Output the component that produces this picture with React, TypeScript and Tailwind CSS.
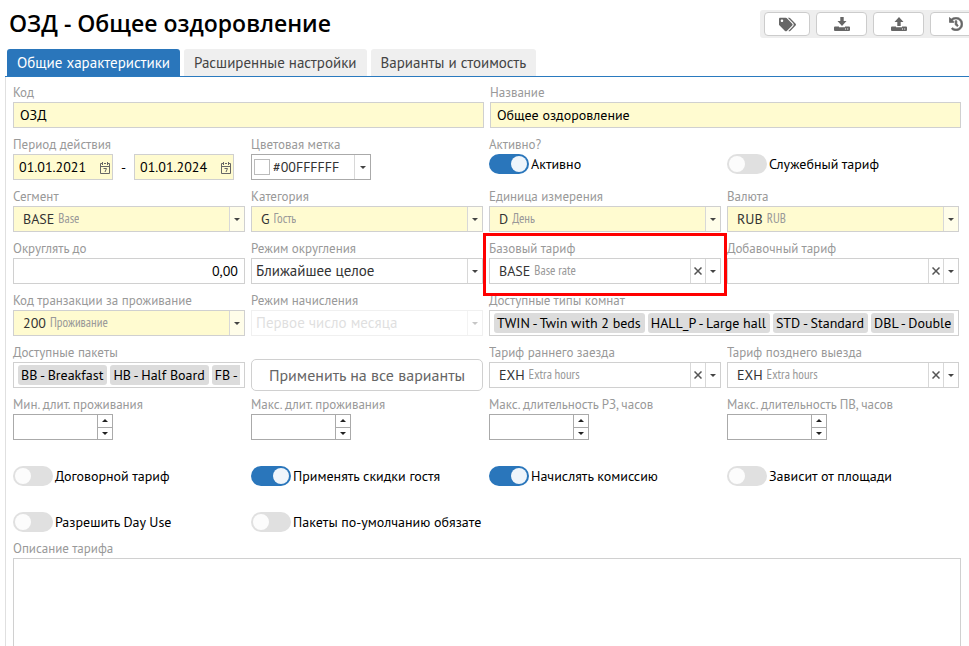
import type { ReactNode } from "react";
import { FaTags, FaHistory } from "react-icons/fa";

const yellow = "bg-[#fffbd0]";

function Caret({ up = false }: { up?: boolean }) {
  return (
    <svg width="6" height="3" viewBox="0 0 6 3" aria-hidden="true" className={up ? "rotate-180" : ""}>
      <path d="M0 0h6L3 3z" fill="currentColor" />
    </svg>
  );
}

function Cross() {
  return (
    <svg width="8" height="8" viewBox="0 0 8 8" aria-hidden="true">
      <path d="M.5.5l7 7M7.500.5l-7 7" stroke="currentColor" strokeWidth="1.5" />
    </svg>
  );
}

function CalendarIcon() {
  return (
    <svg width="10" height="13" viewBox="0 0 10 13" fill="none" stroke="#666" aria-hidden="true">
      <path d="M2 2.500H.5v10h9v-10H8M.5 5.500h9M2.500 1v3M7.500 1v3M4 2.500h2" />
      <path d="M3.500 7.500h3l-1.500 3.500" />
    </svg>
  );
}

function TrayIcon({ up = false }: { up?: boolean }) {
  return (
    <svg width="16" height="14" viewBox="0 0 16 14" fill="currentColor" aria-hidden="true">
      {up ? <path d="M8 0l4.500 5H9.700v4H6.300V5H3.500z" /> : <path d="M6.300 0h3.400v4h2.800L8 9 3.500 4h2.800z" />}
      <path
        fillRule="evenodd"
        d="M1 9.500h4v.7h6v-.7h4a1 1 0 0 1 1 1V13a1 1 0 0 1-1 1H1a1 1 0 0 1-1-1v-2.500a1 1 0 0 1 1-1zm10 2v1h1v-1zm2.200 0v1h1v-1z"
      />
    </svg>
  );
}

function ToolButton({ label, wide = true, children }: { label: string; wide?: boolean; children: ReactNode }) {
  return (
    <button
      type="button"
      aria-label={label}
      className={`flex h-6 items-center justify-center rounded-[4px] border border-[#ccc] bg-white text-[#666] ${wide ? "w-[51px]" : "w-[46px]"}`}
    >
      {children}
    </button>
  );
}

function Field({ label, id, children }: { label: string; id: string; children: ReactNode }) {
  return (
    <div className="relative min-w-0">
      <label htmlFor={id} className="block h-[18px] truncate text-[13px] leading-[18px] text-[#999]">
        {label}
      </label>
      {children}
    </div>
  );
}

function TextField({ label, id, value }: { label: string; id: string; value: string }) {
  return (
    <Field label={label} id={id}>
      <input id={id} defaultValue={value} className={`h-[26px] w-full border border-[#d0d0d0] px-1.5 text-sm text-black ${yellow}`} />
    </Field>
  );
}

function DateBox({ id, value, label }: { id: string; value: string; label: string }) {
  return (
    <div className={`flex h-[26px] w-[100px] items-center border border-[#d0d0d0] ${yellow}`}>
      <input id={id} aria-label={label} defaultValue={value} className="w-full min-w-0 bg-transparent pl-[5px] text-sm text-black" />
      <button type="button" aria-label="Открыть календарь" className="mr-[2px] shrink-0">
        <CalendarIcon />
      </button>
    </div>
  );
}

type LookupProps = { label: string; id: string; code?: string; name?: string; required?: boolean; clearable?: boolean; children?: ReactNode };

function Lookup({ label, id, code = "", name = "", required = false, clearable = false, children }: LookupProps) {
  return (
    <Field label={label} id={id}>
      <div className={`relative flex h-[26px] border border-[#d0d0d0] ${required ? yellow : "bg-white"}`}>
        <div aria-hidden="true" className="flex min-w-0 flex-1 items-center gap-1 pl-[9px] text-sm text-[#333]">
          <span>{code}</span>
          <span className="truncate font-['PT_Sans_Narrow','Noto_Sans',sans-serif] text-[13px] text-[#999]">{name}</span>
        </div>
        <select id={id} defaultValue={code} className="absolute inset-0 h-full w-full opacity-0">
          <option value={code}>{`${code} ${name}`}</option>
        </select>
        {clearable && (
          <button type="button" aria-label="Очистить" className="relative flex w-[15px] items-center justify-center border-l border-[#d8d8d8] text-[#555]">
            <Cross />
          </button>
        )}
        <span className={`flex w-[15px] items-center justify-center border-l border-[#d8d8d8] text-[#444] ${required ? "bg-[#fffde9]" : ""}`}>
          <Caret />
        </span>
      </div>
      {children}
    </Field>
  );
}

function PlainSelect({ label, id, value, disabled = false }: { label: string; id: string; value: string; disabled?: boolean }) {
  return (
    <Field label={label} id={id}>
      <div className={`relative h-[26px] border border-[#d0d0d0] ${disabled ? "opacity-30" : ""}`}>
        <select id={id} disabled={disabled} className={`block h-full w-full appearance-none bg-white pt-px pl-1 text-[15px] ${disabled ? "text-[#999]" : "text-[#333]"}`}>
          <option>{value}</option>
        </select>
        <span className="pointer-events-none absolute inset-y-0 right-0 flex w-[15px] items-center justify-center border-l border-[#d8d8d8] text-[#444]">
          <Caret />
        </span>
      </div>
    </Field>
  );
}

function Tags({ label, id, items }: { label: string; id: string; items: string[] }) {
  return (
    <div className="min-w-0">
      <div id={id} className="h-[18px] text-[13px] leading-[18px] text-[#999]">{label}</div>
      <div className="h-[26px] border border-[#d0d0d0] px-1 py-[2px]">
        <ul aria-labelledby={id} className="flex gap-[3px] overflow-hidden">
          {items.map((item) => (
            <li key={item} className="h-5 shrink-0 rounded-[3px] bg-[#dcdcdc] pr-1 pl-[3px] text-sm leading-5 whitespace-nowrap text-black">
              {item}
            </li>
          ))}
        </ul>
      </div>
    </div>
  );
}

function Spinner({ label, id }: { label: string; id: string }) {
  return (
    <Field label={label} id={id}>
      <div className="flex h-[26px] w-[100px] border border-[#aaa]">
        <input id={id} type="text" inputMode="numeric" className="w-full min-w-0 px-1 text-sm" />
        <div className="flex w-[15px] shrink-0 flex-col border-l border-[#aaa] text-[#222]">
          <button type="button" aria-label="Увеличить" className="flex flex-1 items-center justify-center border-b border-[#aaa]">
            <Caret up />
          </button>
          <button type="button" aria-label="Уменьшить" className="flex flex-1 items-center justify-center">
            <Caret />
          </button>
        </div>
      </div>
    </Field>
  );
}

function Toggle({ label, on = false }: { label: string; on?: boolean }) {
  return (
    <label className="flex h-5 items-center gap-[2px] text-sm whitespace-nowrap text-black">
      <input
        type="checkbox"
        defaultChecked={on}
        className="flex h-5 w-10 shrink-0 appearance-none items-center rounded-full bg-[#e0e0e0] px-[2px] before:block before:size-4 before:rounded-full before:bg-[#fcfcfc] checked:justify-end checked:bg-[#2a76bb] checked:before:bg-[#eff5fb]"
      />
      {label}
    </label>
  );
}

function Tab({ label, active = false }: { label: string; active?: boolean }) {
  return (
    <button
      type="button"
      role="tab"
      aria-selected={active}
      className={`h-[27px] rounded-t-[3px] px-2.5 pt-px text-[15px] whitespace-nowrap ${active ? "bg-[#2a76bb] text-white" : "bg-[#efefef] text-[#444]"}`}
    >
      {label}
    </button>
  );
}

export default function App() {
  return (
    <main className="h-screen overflow-hidden bg-white font-['PT_Sans','Noto_Sans',sans-serif]">
      <header className="flex h-[49px] items-start justify-between overflow-hidden">
        <h1 className="pt-[7px] pl-[9px] font-['Open_Sans','Noto_Sans',sans-serif] text-[23px] leading-8 font-semibold whitespace-nowrap text-black">ОЗД - Общее оздоровление</h1>
        <div className="mt-2.5 -mr-4 flex h-7 shrink-0 gap-1.5 rounded-[3px] bg-[#eee] px-1 py-[2px]">
          <ToolButton label="Метки" wide={false}><FaTags size={17} /></ToolButton>
          <ToolButton label="Загрузить"><TrayIcon /></ToolButton>
          <ToolButton label="Выгрузить"><TrayIcon up /></ToolButton>
          <ToolButton label="История"><FaHistory size={14} stroke="currentColor" strokeWidth={24} /></ToolButton>
        </div>
      </header>
      <div role="tablist" className="ml-[5px] flex gap-1 border-b border-[#2a7abf] pl-[2px]">
        <Tab label="Общие характеристики" active />
        <Tab label="Расширенные настройки" />
        <Tab label="Варианты и стоимость" />
      </div>
      <form className="ml-[5px] flex h-full flex-col gap-2 border-l border-[#e0e0e0] pt-[7px] pr-2 pl-[7px]">
        <div className="grid grid-cols-2 gap-x-1.5">
          <TextField label="Код" id="code" value="ОЗД" />
          <TextField label="Название" id="name" value="Общее оздоровление" />
        </div>
        <div className="grid grid-cols-4 gap-x-1.5 gap-y-2 pr-[2px]">
          <Field label="Период действия" id="from">
            <div className="flex items-center text-sm">
              <DateBox id="from" value="01.01.2021" label="Начало периода" />
              <span className="w-[21px] text-center">-</span>
              <DateBox id="to" value="01.01.2024" label="Конец периода" />
            </div>
          </Field>
          <Field label="Цветовая метка" id="color">
            <div className="flex h-[26px] w-[120px] items-center border border-[#aaa]">
              <span className="ml-[2px] size-4 shrink-0 border border-[#bbb]" />
              <input id="color" defaultValue="#00FFFFFF" className="w-full min-w-0 pl-[3px] text-sm text-[#333]" />
              <button type="button" aria-label="Выбрать цвет" className="flex h-full w-4 shrink-0 items-center justify-center border-l border-[#d8d8d8] text-[#444]">
                <Caret />
              </button>
            </div>
          </Field>
          <div>
            <div className="h-[18px] text-[13px] leading-[18px] text-[#999]">Активно?</div>
            <Toggle label="Активно" on />
          </div>
          <div className="pt-[18px]">
            <Toggle label="Служебный тариф" />
          </div>

          <Lookup label="Сегмент" id="segment" code="BASE" name="Base" required />
          <Lookup label="Категория" id="category" code="G" name="Гость" required />
          <Lookup label="Единица измерения" id="unit" code="D" name="День" required />
          <Lookup label="Валюта" id="currency" code="RUB" name="RUB" required />

          <Field label="Округлять до" id="round">
            <input id="round" defaultValue="0,00" className="h-[26px] w-full border border-[#d0d0d0] px-1.5 text-right text-sm text-black" />
          </Field>
          <PlainSelect label="Режим округления" id="mode" value="Ближайшее целое" />
          <Lookup label="Базовый тариф" id="base" code="BASE" name="Base rate" clearable>
            <div className="pointer-events-none absolute -inset-x-1.5 -top-[7px] -bottom-3 z-10 border-3 border-[#f00]" />
          </Lookup>
          <Lookup label="Добавочный тариф" id="extra" clearable />

          <Lookup label="Код транзакции за проживание" id="transaction" code="200" name="Проживание" required />
          <PlainSelect label="Режим начисления" id="charge" value="Первое число месяца" disabled />
          <div className="col-span-2">
            <Tags label="Доступные типы комнат" id="rooms" items={["TWIN - Twin with 2 beds", "HALL_P - Large hall", "STD - Standard", "DBL - Double"]} />
          </div>

          <Tags label="Доступные пакеты" id="packages" items={["BB - Breakfast", "HB - Half Board", "FB -"]} />
          <button type="button" className="-mb-[3px] h-8 self-end rounded-[5px] border border-[#d0d0d0] text-base whitespace-nowrap text-[#666]">
            Применить на все варианты
          </button>
          <Lookup label="Тариф раннего заезда" id="early" code="EXH" name="Extra hours" clearable />
          <Lookup label="Тариф позднего выезда" id="late" code="EXH" name="Extra hours" clearable />

          <Spinner label="Мин. длит. проживания" id="min-stay" />
          <Spinner label="Макс. длит. проживания" id="max-stay" />
          <Spinner label="Макс. длительность РЗ, часов" id="max-early" />
          <Spinner label="Макс. длительность ПВ, часов" id="max-late" />
        </div>
        <div className="mt-[18px] grid grid-cols-4 gap-x-1.5 gap-y-[26px] pr-[2px]">
          <Toggle label="Договорной тариф" />
          <Toggle label="Применять скидки гостя" on />
          <Toggle label="Начислять комиссию" on />
          <Toggle label="Зависит от площади" />
          <Toggle label="Разрешить Day Use" />
          <Toggle label="Пакеты по-умолчанию обязате" />
        </div>
        <Field label="Описание тарифа" id="description">
          <textarea id="description" rows={6} className="block w-full resize-none border border-[#d0d0d0] p-1 text-sm" />
        </Field>
      </form>
    </main>
  );
}
